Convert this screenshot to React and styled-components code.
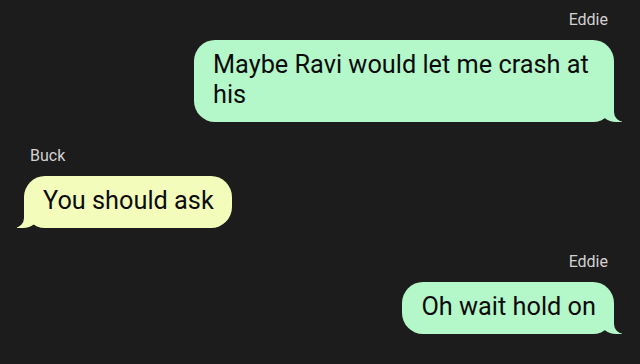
import React from "react";
import styled, { createGlobalStyle, css } from "styled-components";

const BG = "#1c1c1c";

const GlobalStyle = createGlobalStyle`
  html, body {
    margin: 0;
    padding: 0;
    background: ${BG};
  }
  body {
    font-family: Roboto, "Noto Sans", sans-serif;
  }
`;

const Thread = styled.div`
  width: 640px;
  height: 364px;
  box-sizing: border-box;
  padding: 10px 26px 0 24px;
  display: flex;
  flex-direction: column;
  overflow: hidden;
`;

const Group = styled.div`
  display: flex;
  flex-direction: column;
  align-items: ${(p) => (p.$mine ? "flex-end" : "flex-start")};
  margin-bottom: ${(p) => p.$gap || 0}px;
`;

const Sender = styled.div`
  font-size: 16px;
  line-height: 20px;
  color: #d2d2d2;
  margin: 0 ${(p) => (p.$mine ? "6px" : "0")} 10px ${(p) => (p.$mine ? "0" : "6px")};
`;

const Bubble = styled.div`
  position: relative;
  max-width: 420px;
  box-sizing: border-box;
  padding: 10px 18px 12px 19px;
  border-radius: 21px;
  font-size: 25.3px;
  line-height: 30px;
  color: #0c0c0c;
  background: ${(p) => (p.$mine ? "#b4f7c9" : "#f4fcbc")};

  &::before,
  &::after {
    content: "";
    position: absolute;
    bottom: 0;
    height: 22px;
  }

  ${(p) =>
    p.$mine
      ? css`
          &::before {
            right: -8px;
            width: 22px;
            background: #b4f7c9;
            border-bottom-left-radius: 16px 14px;
          }
          &::after {
            right: -26px;
            width: 26px;
            background: ${BG};
            border-bottom-left-radius: 10px;
          }
        `
      : css`
          &::before {
            left: -7px;
            width: 22px;
            background: #f4fcbc;
            border-bottom-right-radius: 16px 14px;
          }
          &::after {
            left: -26px;
            width: 26px;
            background: ${BG};
            border-bottom-right-radius: 10px;
          }
        `}
`;

const Text = styled.span`
  position: relative;
  z-index: 1;
`;

const messages = [
  { from: "Eddie", mine: true, text: "Maybe Ravi would let me crash at his", gap: 24 },
  { from: "Buck", mine: false, text: "You should ask", gap: 24 },
  { from: "Eddie", mine: true, text: "Oh wait hold on", gap: 0 },
];

export default function App() {
  return (
    <>
      <GlobalStyle />
      <Thread>
        {messages.map((m, i) => (
          <Group key={i} $mine={m.mine} $gap={m.gap}>
            <Sender $mine={m.mine}>{m.from}</Sender>
            <Bubble $mine={m.mine}>
              <Text>{m.text}</Text>
            </Bubble>
          </Group>
        ))}
      </Thread>
    </>
  );
}
